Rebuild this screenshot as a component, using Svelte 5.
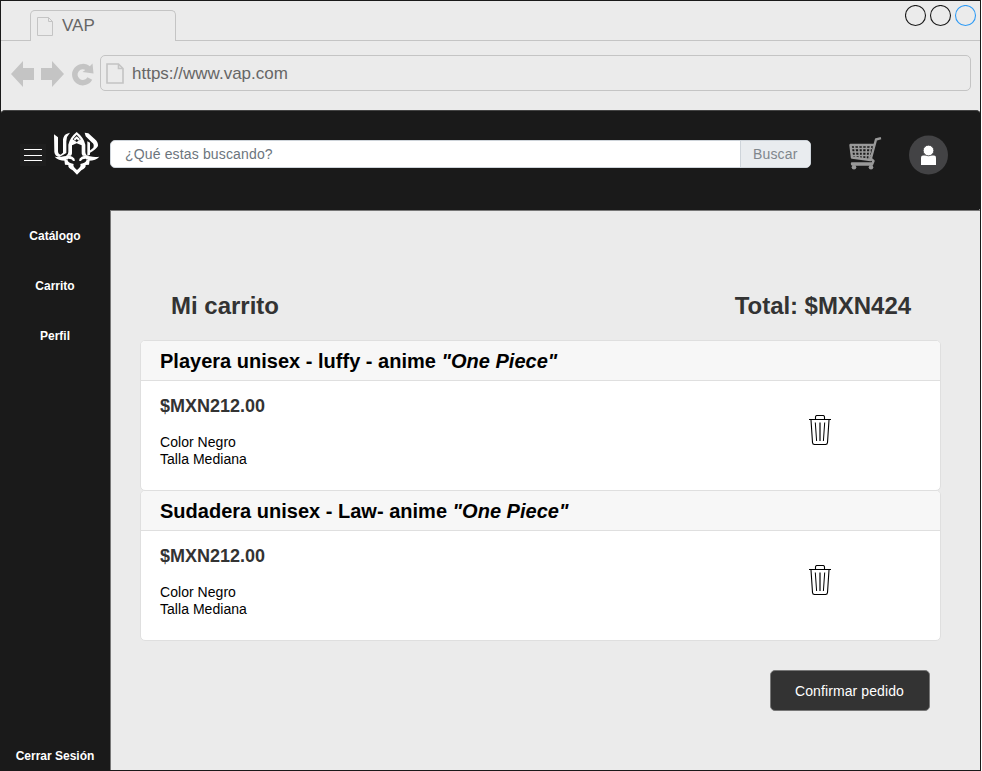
<script>
  const links = ['Catálogo', 'Carrito', 'Perfil'];
  const items = [
    { name: 'Playera unisex - luffy - anime', series: '"One Piece"', price: '$MXN212.00', color: 'Negro', size: 'Mediana' },
    { name: 'Sudadera unisex - Law- anime', series: '"One Piece"', price: '$MXN212.00', color: 'Negro', size: 'Mediana' }
  ];
</script>

<div class="window">
  <div class="tabs">
    <div class="edge"></div>
    <div class="tab">
      <svg width="16" height="19" viewBox="0 0 16 19" fill="none" stroke="#c4c4c4"><path d="M.5 .5H11.5L15.5 4.5V18.5H.5ZM11.5 .5V4.5H15.5" /></svg>
      <span>VAP</span>
    </div>
    <div class="rest">
      <svg width="72" height="22" viewBox="0 0 72 22" fill="none" stroke-width="1.1">
        <circle cx="10.500" cy="10.500" r="10" stroke="#1a1a1a" /><circle cx="35.500" cy="10.500" r="10" stroke="#1a1a1a" /><circle cx="60.500" cy="10.500" r="10" stroke="#2f9bf5" />
      </svg>
    </div>
  </div>
  <div class="bar">
    <svg class="nav" width="84" height="26" viewBox="0 0 84 26">
      <g fill="#c4c4c4">
        <path d="M0 13L12 0V7H23V19H12V26Z" />
        <path d="M53 13L41 0V7H30V19H41V26Z" />
        <path d="M78.500 5.500L81.500 2.500L82.500 12.500L71.500 11L75 8.500Z" />
      </g>
      <path d="M77.500 8A8 8 0 1 0 78.800 17.500" fill="none" stroke="#c4c4c4" stroke-width="5.500" />
    </svg>
    <div class="url">
      <svg width="18" height="21" viewBox="0 0 18 21" fill="none" stroke="#c4c4c4" stroke-width="1.600"><path d="M1 1H12.500L17 5.500V20H1ZM12.500 1V5.500H17" /></svg>
      <span>https://www.vap.com</span>
    </div>
  </div>

  <header>
    <button class="burger" aria-label="Menú"><i></i><i></i><i></i></button>
    <svg class="logo" width="50" height="46" viewBox="0 0 150 138" fill="#fff">
      <path d="M6 13L18 22V64Q19 74 26 74L33 68V28Q35 15 45 11L54 8L45 21L43 34V69L34 74L22 81Q9 80 7 66Z" />
      <path d="M74 6Q54 22 49 44V66Q49 74 42 78L57 77Q61 73 60 67V46L74 40L89 46V67Q88 73 92 77L106 78Q100 74 100 66V44Q95 22 74 6ZM74 14L86 28L74 36L62 28Z" fill-rule="evenodd" />
      <path d="M65 27L74 19L84 27L80 32L74 27L69 32Z" />
      <path d="M98 8L109 10L128 27Q139 36 138 48Q132 58 113 69V62L124 53Q128 43 119 37L101 19Z" />
      <path d="M106 34L114 38V74L106 78Z" />
      <path d="M8 80Q23 82 36 79Q50 75 61 80Q69 84 69 92L63 93Q60 86 49 86Q42 88 40 92Q18 92 8 80ZM142 80Q127 82 114 79Q100 75 89 80Q81 84 81 92L87 93Q90 86 101 86Q108 88 110 92Q132 92 142 80Z" />
      <path d="M37 91L47 88Q45 96 57 100L65 102Q61 110 75 120Q89 110 85 102L93 100Q105 96 103 88L113 91L111 104L101 105Q103 114 88 121L75 134L62 121Q47 114 49 105L39 104Z" />
    </svg>
    <div class="search">
      <div class="field">¿Qué estas buscando?</div>
      <div class="go">Buscar</div>
    </div>
    <svg class="cart" width="34" height="36" viewBox="0 0 34 36" fill="none" stroke="#999">
      <path d="M32 2.200L27 3.500L21.500 24L3 21.500L1.500 9H25" stroke-width="2.400" stroke-linejoin="round" />
      <path d="M21.500 22.500L24.500 25L23 28.500H4.500Q3 29 3 27.500H23" stroke-width="2.400" stroke-linejoin="round" />
      <path d="M5.500 9L7 22M9.500 9L10.500 22M13.500 9V23M17.500 9L17 23M21.500 9L20 23M2 12.500H23M2 16H22M3 19.500H22" stroke-width="1.500" />
      <g fill="#999" stroke="none"><circle cx="5" cy="31.300" r="2.300" /><circle cx="22" cy="31.300" r="2.300" /></g>
    </svg>
    <svg class="user" width="40" height="40" viewBox="0 0 40 40">
      <circle cx="19.500" cy="20" r="19.500" fill="#434345" />
      <path d="M12 30V22.500Q12 20.500 14 20.500H25Q27 20.500 27 22.500V30Z" fill="#fff" />
      <circle cx="19.500" cy="15.500" r="5.300" fill="#fff" stroke="#434345" stroke-width=".8" />
    </svg>
  </header>

  <div class="body">
    <nav>
      {#each links as link}
        <a href="#top">{link}</a>
      {/each}
      <a class="last" href="#top">Cerrar Sesión</a>
    </nav>
    <main>
      <div class="heading"><h1>Mi carrito</h1><h1>Total: $MXN424</h1></div>
      {#each items as item}
        <article>
          <h2>{item.name} <em>{item.series}</em></h2>
          <div class="content">
            <div class="info">
              <strong>{item.price}</strong>
              <p>Color {item.color}<br />Talla {item.size}</p>
            </div>
            <svg width="22" height="32" viewBox="0 0 22 32" fill="none" stroke="#000">
              <path d="M0 4.500H22M6.500 4.500V2Q6.500 .5 8 .5H14Q15.500 .5 15.500 2V4.500" stroke-width="1.100" />
              <path d="M2 5L3.500 27.500Q3.600 29.500 5.500 29.500H16.500Q18.400 29.500 18.500 27.500L20 5" stroke-width="1.100" />
              <path d="M6.300 7.500L7.600 26M15.700 7.500L14.400 26" stroke-width="1" />
              <path d="M10.500 7.500V26M11.500 7.500V26" stroke="#555" stroke-width=".9" />
            </svg>
          </div>
        </article>
      {/each}
      <button class="confirm">Confirmar pedido</button>
    </main>
  </div>
</div>

<style>
  :global(body) { background: #fff; }
  * { box-sizing: border-box; }
  svg { display: block; flex: none; }
  .window { width: 981px; height: 771px; border: 1px solid #1a1a1a; background: #ebebeb; font-family: "Liberation Sans", Arial, sans-serif; overflow: hidden; display: flex; flex-direction: column; }
  .tabs { display: flex; height: 40px; flex: none; }
  .edge { width: 29px; border-bottom: 1px solid #c4c4c4; }
  .tab { width: 146px; height: 31px; margin-top: 9px; border: 1px solid #c4c4c4; border-bottom: 0; border-radius: 5px 5px 0 0; display: flex; padding: 6px 0 0 6px; gap: 9px; font-size: 17px; line-height: 18px; color: #666; }
  .rest { flex: 1; border-bottom: 1px solid #c4c4c4; display: flex; justify-content: flex-end; padding: 4px 3px 0 0; }
  .bar { display: flex; height: 69px; flex: none; padding: 14px 9px 0 10px; }
  .nav { margin-top: 6px; }
  .url { margin-left: 5px; flex: 1; height: 36px; border: 1px solid #c4c4c4; border-radius: 5px; display: flex; align-items: center; gap: 8px; padding-left: 5px; font-size: 17px; color: #666; }
  .url svg { margin-top: 1px; }
  .url span { margin-top: 2px; }
  header { height: 101px; margin: 0 -1px; flex: none; background: #1a1a1a; border-top: 1px solid #444; border-radius: 5px 5px 5px 0; display: flex; padding-left: 20px; }
  .burger { width: 26px; height: 22px; margin: 33px 0 0; padding: 5px 4px; border: 0; background: #1e1e1e; display: flex; flex-direction: column; justify-content: space-between; }
  .burger i { height: 1px; background: #fff; }
  .logo { margin: 19px 0 0 6px; }
  .search { margin: 29px 0 0 8px; width: 701px; height: 28px; display: flex; border: 1px solid #ced4da; border-radius: 5px; overflow: hidden; font-size: 14px; line-height: 26px; color: #6c757d; background: #fff; }
  .field { flex: 1; padding-left: 14px; letter-spacing: .15px; }
  .go { width: 70px; border-left: 1px solid #ced4da; background: #e9ecef; padding-left: 12px; color: #7f868c; letter-spacing: .15px; }
  .cart { margin: 25px 0 0 38px; }
  .user { margin: 24px 0 0 26px; }
  .body { flex: 1; display: flex; min-height: 0; margin-top: -1px; }
  nav { width: 111px; margin-left: -1px; background: #1a1a1a; border-right: 1px solid #777; flex: none; display: flex; flex-direction: column; padding-top: 1px; }
  nav a { height: 50px; line-height: 51px; text-align: center; color: #fff; font-size: 12px; font-weight: bold; text-decoration: none; }
  nav .last { margin-top: auto; height: 30px; line-height: 33px; }
  main { flex: 1; padding: 80px 39px 0 29px; display: flex; flex-direction: column; border-top: 1px solid #777; }
  .heading { display: flex; justify-content: space-between; height: 49px; padding: 0 30px 0 31px; }
  h1 { margin: 0; font-size: 24px; line-height: 30px; color: #333; }
  h1 + h1 { letter-spacing: -.05px; }
  article { height: 151px; margin-bottom: -1px; border: 1px solid #dfdfdf; border-radius: 5px; background: #fff; flex: none; overflow: hidden; }
  h2 { margin: 0; height: 40px; padding-left: 19px; background: #f7f7f7; border-bottom: 1px solid #dfdfdf; font-size: 20px; line-height: 41px; color: #000; letter-spacing: .01px; }
  .content { display: flex; justify-content: space-between; padding: 0 109px 0 19px; }
  .content svg { margin-top: 34px; }
  strong { display: block; margin-top: 15px; font-size: 18px; line-height: 20px; color: #333; }
  p { margin: 18px 0 0; font-size: 14px; line-height: 17px; color: #000; letter-spacing: .04px; }
  .confirm { align-self: flex-end; margin: 30px 11px 0 0; width: 160px; height: 41px; border: 1px solid #777; border-radius: 5px; background: #333; color: #fff; font: 14px "Liberation Sans", Arial, sans-serif; letter-spacing: .1px; padding: 0 1px 0 0; }
</style>
